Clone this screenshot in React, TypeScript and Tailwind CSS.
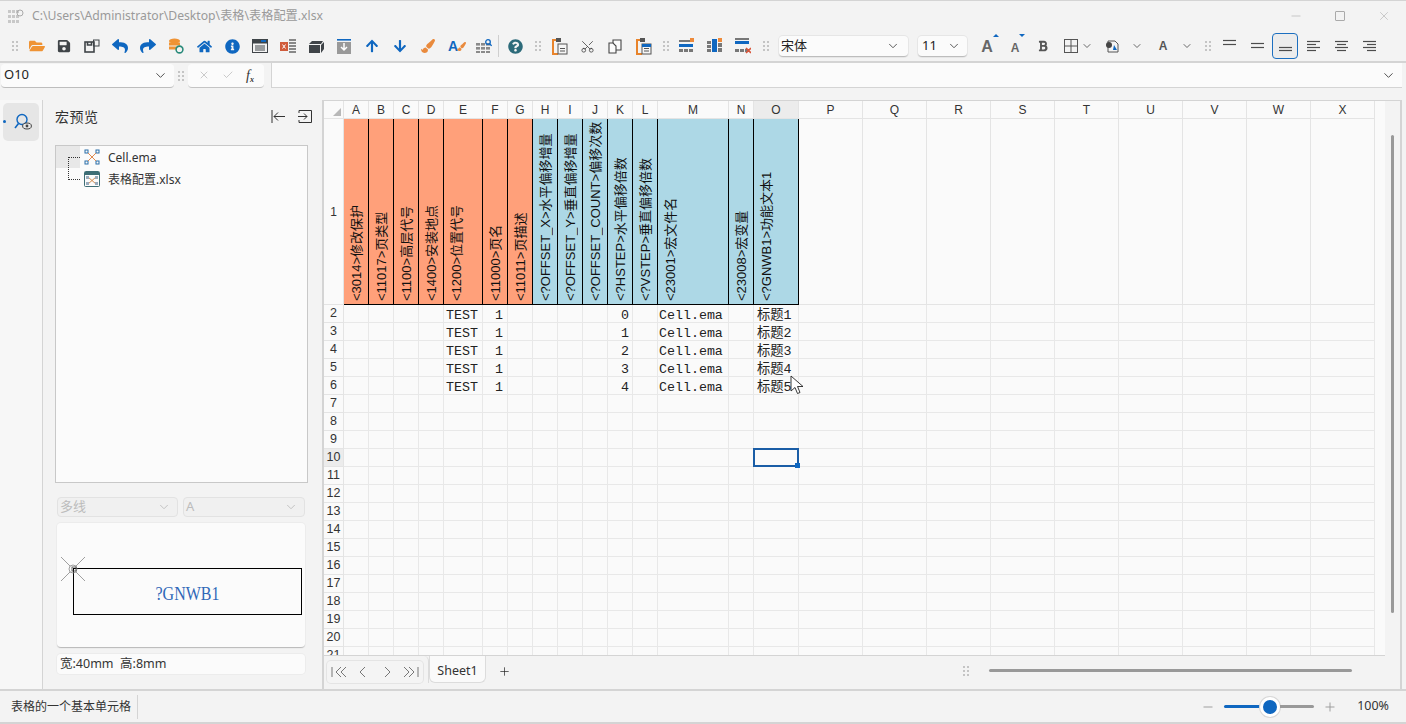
import type { ReactNode } from "react"
import { ChevronDown, Minus, Plus, X, Check, Scissors } from "lucide-react"
import { FaFolderOpen, FaHome, FaInfoCircle, FaQuestionCircle, FaReply, FaShare, FaArrowUp, FaArrowDown, FaSave, FaBold, FaPaintBrush } from "react-icons/fa"

const ui = "font-['Noto_Sans','Noto_Sans_CJK_SC',sans-serif]"
const arial = "font-['Liberation_Sans','Noto_Sans_CJK_SC',sans-serif]"
const mono = "font-['Liberation_Mono','Noto_Sans_CJK_SC',monospace]"

const letters = "ABCDEFGHIJKLMNOPQRSTUVWX".split("")
const widths = [25, 25, 25, 25, 39, 25, 25, 25, 25, 25, 25, 25, 71, 25, 45, 64, 64, 64, 64, 64, 64, 64, 64, 64]
const heads = [
  "<3014>修改保护", "<11017>页类型", "<1100>高层代号", "<1400>安装地点", "<1200>位置代号", "<11000>页名", "<11011>页描述",
  "<?OFFSET_X>水平偏移增量", "<?OFFSET_Y>垂直偏移增量", "<?OFFSET_COUNT>偏移次数", "<?HSTEP>水平偏移倍数", "<?VSTEP>垂直偏移倍数",
  "<23001>宏文件名", "<23008>宏变量", "<?GNWB1>功能文本1",
]

function Dots() {
  return (
    <svg width="6" height="10" viewBox="0 0 6 10" fill="#c4c4c4">
      <rect x="0" y="0" width="2" height="2" /><rect x="4" y="0" width="2" height="2" />
      <rect x="0" y="4" width="2" height="2" /><rect x="4" y="4" width="2" height="2" />
      <rect x="0" y="8" width="2" height="2" /><rect x="4" y="8" width="2" height="2" />
    </svg>
  )
}

function Grip({ className = "" }: { className?: string }) {
  return (
    <div className={`w-4 h-7 shrink-0 flex items-center justify-center ${className}`}>
      <Dots />
    </div>
  )
}

function Tool({ children, active, className = "" }: { children: ReactNode; active?: boolean; className?: string }) {
  return (
    <div className={active
      ? `w-[26px] h-[26px] mx-px shrink-0 flex items-center justify-center rounded-[4px] border border-[#1c6fc0] bg-[#ececec] ${className}`
      : `w-7 h-7 shrink-0 flex items-center justify-center ${className}`}>
      {children}
    </div>
  )
}

function Lines({ rows, align = "left" }: { rows: [number, number][]; align?: "left" | "center" | "right" }) {
  return (
    <svg width="13" height="14" viewBox="0 0 13 14" stroke="#4c4c4c" strokeWidth="1.2">
      {rows.map(([y, w], i) => {
        const x = align === "left" ? 0 : align === "center" ? (13 - w) / 2 : 13 - w
        return <line key={i} x1={x} x2={x + w} y1={y + 0.5} y2={y + 0.5} />
      })}
    </svg>
  )
}

function TableIcon({ kind }: { kind: "row" | "col" | "del" }) {
  const g = "#777"
  return (
    <svg width="16" height="16" viewBox="0 0 16 16">
      {kind === "col" ? (
        <>
          <rect x="0" y="3" width="4" height="3" fill={g} /><rect x="0" y="7" width="4" height="3" fill={g} /><rect x="0" y="11" width="4" height="3" fill={g} />
          <rect x="5" y="1" width="5" height="13" fill="#0f67c0" />
          <rect x="11" y="5" width="4" height="4" fill={g} /><rect x="11" y="10" width="4" height="4" fill={g} />
          <rect x="11" y="0" width="4" height="4" fill="#ee8a3a" />
        </>
      ) : (
        <>
          <rect x="0" y={kind === "del" ? 0 : 2} width="14" height="2" fill={g} />
          <rect x="0" y={kind === "del" ? 3 : 6} width="14" height="3" fill="#0f67c0" />
          <rect x="0" y="11" width="4" height="3" fill={g} /><rect x="5" y="11" width="4" height="3" fill={g} /><rect x="10" y="11" width="4" height="3" fill={g} />
          {kind === "row" && <rect x="11" y="0" width="4" height="4" fill="#ee8a3a" />}
          {kind === "del" && <path d="M11 10l5 5M16 10l-5 5" stroke="#d9553a" strokeWidth="1.6" />}
        </>
      )}
    </svg>
  )
}

function Clip({ blue }: { blue?: boolean }) {
  return (
    <svg width="16" height="17" viewBox="0 0 16 17" fill="none">
      <path d="M4 2H1v14h5" stroke="#e8842c" strokeWidth="2" />
      <rect x="4" y="0" width="5" height="4" fill="#555" />
      <rect x="6" y="6" width="9" height="10" fill="#f6f6f6" stroke="#555" />
      {blue && <rect x="6" y="6" width="9" height="3" fill="#0f67c0" />}
      <path d="M8 10.5h5M8 13h5" stroke="#555" />
    </svg>
  )
}

function FontSizeIcon({ size, up }: { size: string; up?: boolean }) {
  return (
    <div className="relative">
      <span className={`${arial} ${size} font-bold text-[#666] leading-none`}>A</span>
      <svg width="6" height="3" viewBox="0 0 6 3" fill="#0f67c0" className="absolute -right-[6px] top-0">
        <path d={up ? "M3 0l3 3H0z" : "M0 0h6L3 3z"} />
      </svg>
    </div>
  )
}

function Toolbar() {
  return (
    <div className="h-[30px] flex items-center pl-[7px]">
      <Grip />
      <Tool><FaFolderOpen size={16} color="#ef9334" /></Tool>
      <Tool className="-ml-px"><FaSave size={14} color="#3f4448" /></Tool>
      <Tool>
        <svg width="16" height="14" viewBox="0 0 16 14" fill="none" stroke="#3f4448" strokeWidth="1.6"><rect x="1" y="3" width="9" height="10" /><rect x="9.500" y="1" width="5.500" height="6" strokeWidth="1" /><path d="M3.500 3v3h4V3" /></svg>
      </Tool>
      <Tool><FaReply size={16} color="#0f67c0" /></Tool>
      <Tool><FaShare size={16} color="#0f67c0" /></Tool>
      <Tool>
        <svg width="16" height="16" viewBox="0 0 16 16"><ellipse cx="6.500" cy="3" rx="5.500" ry="2.500" fill="#ef9334" /><rect x="1" y="4.500" width="11" height="3" fill="#ef9334" /><rect x="1" y="8.500" width="8" height="3" fill="#ef9334" /><circle cx="11.500" cy="11.500" r="3.400" fill="none" stroke="#2a8b7b" strokeWidth="1.6" /></svg>
      </Tool>
      <Tool><FaHome size={15} color="#0f67c0" /></Tool>
      <Tool><FaInfoCircle size={15} color="#0f67c0" /></Tool>
      <Tool>
        <svg width="16" height="14" viewBox="0 0 16 14" fill="none" stroke="#3f4448"><rect x="0.500" y="0.500" width="15" height="13" /><rect x="1" y="1" width="14" height="3" fill="#3f4448" /><rect x="9" y="1" width="5" height="2" fill="#0f67c0" stroke="none" /><path d="M3 7h10M3 9h10M3 11h10" /></svg>
      </Tool>
      <Tool>
        <svg width="16" height="14" viewBox="0 0 16 14"><rect x="0" y="3" width="8" height="9" fill="#d05c3c" /><path d="M2.500 5.500l3 4M5.500 5.500l-3 4" stroke="#fff" /><path d="M9 1h7M9 4h7M9 7h7M9 10h7M9 13h7" stroke="#666" strokeWidth="1.4" /></svg>
      </Tool>
      <Tool>
        <svg width="15" height="13" viewBox="0 0 15 13" fill="#3f4448"><path d="M0 4l3-3h11l-2 3z" /><rect x="0" y="5" width="11" height="8" /><path d="M12 5l3-3v7l-3 4z" /></svg>
      </Tool>
      <Tool>
        <svg width="14" height="15" viewBox="0 0 14 15"><rect x="0" y="0" width="14" height="1.6" fill="#0f67c0" /><rect x="0" y="3" width="14" height="12" fill="#999" /><path d="M7 4v7M4 8l3 3 3-3" stroke="#fff" strokeWidth="1.5" fill="none" /></svg>
      </Tool>
      <Tool><FaArrowUp size={14} color="#0f67c0" /></Tool>
      <Tool><FaArrowDown size={14} color="#0f67c0" /></Tool>
      <Tool><FaPaintBrush size={14} color="#e98a3d" /></Tool>
      <Tool>
        <div className="relative w-4 h-4">
          <span className={`${arial} absolute left-0 -top-0.5 text-[14px] font-bold text-[#0f67c0]`}>A</span>
          <FaPaintBrush size={9} color="#e98a3d" className="absolute right-[-2px] top-1" />
        </div>
      </Tool>
      <Tool>
        <svg width="16" height="14" viewBox="0 0 16 14" fill="#8a8a8a">
          {[0, 5, 10].map((x) => [4, 8, 12].map((y) => <rect key={`${x}-${y}`} x={x} y={y} width="4" height="2.6" />))}
          <circle cx="12" cy="3" r="2.3" fill="none" stroke="#0f67c0" strokeWidth="1.3" /><path d="M13.6 4.8l2 2" stroke="#0f67c0" strokeWidth="1.3" />
        </svg>
      </Tool>
      <div className="w-px h-[22px] bg-[#cfcfcf] shrink-0" />
      <Tool className="ml-0.5"><FaQuestionCircle size={15} color="#2d6b7a" /></Tool>
      <Grip className="ml-px" />
      <Tool><Clip /></Tool>
      <Tool className="-ml-px"><Scissors size={15} strokeWidth={1.3} color="#444" className="-rotate-90" /></Tool>
      <Tool>
        <svg width="14" height="15" viewBox="0 0 14 15" fill="#fafafa" stroke="#444" strokeWidth="1.1"><path d="M5 1h8v10H5z" /><path d="M1 4h4l3 3v7H1z" /></svg>
      </Tool>
      <Tool className="ml-px"><Clip blue /></Tool>
      <Grip />
      <Tool className="-ml-px"><TableIcon kind="row" /></Tool>
      <Tool><TableIcon kind="col" /></Tool>
      <Tool><TableIcon kind="del" /></Tool>
      <Grip className="ml-px" />
      <div className={`${ui} w-[129px] h-[21px] ml-[5px] rounded-[4px] bg-[#fbfbfb] border-b border-[#bdbdbd] shadow-[0_0_0_1px_#e6e6e6] shrink-0 flex items-center justify-between pl-0.5 pr-2 text-[13px] text-[#222]`}>
        <span>宋体</span><ChevronDown size={14} strokeWidth={1.5} color="#444" />
      </div>
      <div className={`${ui} w-[49px] h-[21px] ml-[10px] rounded-[4px] bg-[#fbfbfb] border-b border-[#bdbdbd] shadow-[0_0_0_1px_#e6e6e6] shrink-0 flex items-center justify-between pl-1 pr-1.5 text-[13px] text-[#222]`}>
        <span>11</span><ChevronDown size={14} strokeWidth={1.5} color="#444" />
      </div>
      <div className="w-[6px] shrink-0" />
      <Tool><FontSizeIcon size="text-[16px]" up /></Tool>
      <Tool><FontSizeIcon size="text-[12px]" /></Tool>
      <Tool><FaBold size={12} color="#555" /></Tool>
      <Tool>
        <svg width="14" height="14" viewBox="0 0 14 14" fill="none" stroke="#555"><rect x="0.500" y="0.500" width="13" height="13" /><path d="M7 0v14M0 7h14" /></svg>
      </Tool>
      <ChevronDown size={12} strokeWidth={1.6} color="#444" className="-ml-1 mr-[5px] shrink-0" />
      <Tool>
        <svg width="13" height="14" viewBox="0 0 13 14"><path d="M2 2h7l3 3v8H2z" fill="none" stroke="#555" /><circle cx="3" cy="6" r="3" fill="#444" /><path d="M8 6l3 5H7z" fill="#0f67c0" /></svg>
      </Tool>
      <ChevronDown size={12} strokeWidth={1.6} color="#444" className="ml-[5px] mr-[6px] shrink-0" />
      <Tool><span className={`${arial} text-[12px] font-bold text-[#555]`}>A</span></Tool>
      <ChevronDown size={12} strokeWidth={1.6} color="#444" className="ml-1 shrink-0" />
      <Grip className="ml-[7px]" />
      <Tool className="-ml-px"><Lines rows={[[1, 13], [5, 13]]} /></Tool>
      <Tool><Lines rows={[[4, 13], [8, 13]]} /></Tool>
      <Tool active><Lines rows={[[8, 13], [11, 13]]} /></Tool>
      <Tool><Lines rows={[[2, 13], [5, 9], [8, 13], [11, 9]]} /></Tool>
      <Tool><Lines rows={[[2, 13], [5, 9], [8, 13], [11, 9]]} align="center" /></Tool>
      <Tool><Lines rows={[[2, 13], [5, 9], [8, 13], [11, 9]]} align="right" /></Tool>
    </div>
  )
}

function FormulaBar() {
  return (
    <div className="h-[27px] flex items-center pl-px pr-1 border-t-2 border-[#d4d4d4]">
      <div className={`${ui} w-[173px] h-[24px] shrink-0 rounded-[4px] bg-[#fbfbfb] border-b border-[#bdbdbd] flex items-center justify-between pl-[3px] pr-1.5 text-[13px] text-[#222]`}>
        <span>O10</span><ChevronDown size={15} strokeWidth={1.5} color="#444" />
      </div>
      <div className="w-[14px] shrink-0 flex justify-center"><Dots /></div>
      <div className="w-[76px] h-[24px] shrink-0 rounded-[4px] bg-[#fbfbfb] border-b border-[#c4c4c4] flex items-center justify-around px-1">
        <X size={12} strokeWidth={1.2} color="#aaa" />
        <Check size={12} strokeWidth={1.2} color="#aaa" />
        <span className="font-['Liberation_Serif',serif] italic text-[14px] text-[#333]">f<sub className="text-[8px] font-bold">x</sub></span>
      </div>
      <div className="w-[7px] shrink-0" />
      <div className="flex-1 h-[25px] bg-[#fbfbfb] border-b border-l border-[#d4d4d4] flex items-center justify-end pr-1.5">
        <ChevronDown size={15} strokeWidth={1.5} color="#444" />
      </div>
    </div>
  )
}

function Rail() {
  return (
    <div className="w-[43px] shrink-0 border-r border-[#d4d4d4] bg-[#f7f7f7] pt-[3px] pl-[3px]">
      <div className="relative w-9 h-[38px] rounded-[5px] bg-[#e6e6e6] flex items-center justify-center">
        <span className="absolute left-0 top-[17px] w-[3px] h-[3px] rounded-full bg-[#0f67c0]" />
        <svg width="18" height="18" viewBox="0 0 18 18" fill="none" className="ml-1">
          <circle cx="8" cy="6.500" r="5" stroke="#0f67c0" strokeWidth="1.4" />
          <path d="M4.500 10.500L1 15" stroke="#0f67c0" strokeWidth="1.6" />
          <ellipse cx="13" cy="13" rx="4.400" ry="3" stroke="#444" strokeWidth="1" fill="#e6e6e6" />
          <circle cx="13" cy="13" r="1.400" fill="#444" />
        </svg>
      </div>
    </div>
  )
}

function MiniSelect({ label, width }: { label: string; width: string }) {
  return (
    <div className={`${width} h-[20px] rounded-[4px] border border-[#e2e2e2] bg-[#f0f0f0] flex items-center justify-between pl-0.5 pr-1.5 text-[13px] text-[#bcbcbc]`}>
      <span>{label}</span><ChevronDown size={14} strokeWidth={1.5} color="#bcbcbc" />
    </div>
  )
}

function MacroPanel() {
  return (
    <div className={`${ui} w-[279px] shrink-0 pl-3 flex flex-col`}>
      <div className="h-[33px] flex items-center justify-between pr-[10px]">
        <span className="text-[14px] text-[#333] tracking-[0.5px]">宏预览</span>
        <div className="flex items-center gap-[12px]">
          <svg width="15" height="13" viewBox="0 0 15 13" fill="none" stroke="#333"><path d="M1 0v13M14 6.500H3M7 2.500l-4 4 4 4" /></svg>
          <svg width="14" height="13" viewBox="0 0 14 13" fill="none" stroke="#333"><path d="M1 3V.5h12.500v12H1V10M0 6.500h9M6 3.500l3 3-3 3" /></svg>
        </div>
      </div>
      <div className="w-[253px] h-[338px] mt-[12px] border border-[#c8c8c8] bg-[#fbfbfb] text-[12px] text-[#333] relative">
        <div className="h-[22px] flex items-center">
          <div className="w-6 h-full bg-[#e8e8e8]" />
          <svg width="16" height="16" viewBox="0 0 16 16" fill="none" className="ml-1" stroke="#2b6ea8">
            <rect x="1" y="1" width="3" height="3" /><rect x="12" y="1" width="3" height="3" /><rect x="1" y="12" width="3" height="3" /><rect x="12" y="12" width="3" height="3" />
            <path d="M4 4l8 8M12 4l-8 8" stroke="#e08a50" />
          </svg>
          <span className="ml-[8px] mt-0.5">Cell.ema</span>
        </div>
        <div className="h-[22px] flex items-center pl-6">
          <svg width="16" height="16" viewBox="0 0 16 16" fill="none" className="ml-1">
            <rect x="0.500" y="0.500" width="15" height="15" rx="1" stroke="#3d6d75" />
            <rect x="1" y="1" width="14" height="3" fill="#3d6d75" />
            <path d="M4 6l8 7M12 6l-8 7" stroke="#d08a50" />
            <rect x="2" y="5" width="3" height="3" fill="#9ab" /><rect x="11" y="5" width="3" height="3" fill="#9ab" /><rect x="2" y="11" width="3" height="3" fill="#9ab" /><rect x="11" y="11" width="3" height="3" fill="#9ab" />
          </svg>
          <span className="ml-[8px] mt-0.5">表格配置.xlsx</span>
        </div>
        {/* tree connector */}
        <div className="absolute left-[12px] top-[11px] w-3 h-[23px] border-l border-t border-b border-dotted border-[#333]" />
      </div>
      <div className="flex gap-[5px] mt-[14px] ml-0.5">
        <MiniSelect label="多线" width="w-[121px]" />
        <MiniSelect label="A" width="w-[122px]" />
      </div>
      <div className="relative w-[248px] h-[125px] mt-[6px] ml-0.5 rounded-[4px] bg-[#fbfbfb] border-b border-[#bdbdbd] shadow-[0_0_0_1px_#ececec] flex items-end pl-[16px] pb-[32px]">
        <div className="w-[229px] h-[47px] border border-black flex items-center justify-center pt-1 font-['Liberation_Serif',serif] text-[16px] text-[#2f68b8]">
          <span className="inline-block scale-y-[1.15]">?GNWB1</span>
        </div>
        <svg width="26" height="26" viewBox="0 0 26 26" fill="none" stroke="#888" strokeWidth="0.8" className="absolute left-[3px] top-[33px]">
          <path d="M1 1l9 9M25 1l-9 9M1 25l9-9M25 25l-9-9" />
          <circle cx="13" cy="13" r="4" />
          <rect x="12" y="11" width="4" height="4" stroke="#444" />
        </svg>
      </div>
      <div className="w-[248px] h-[20px] mt-[6px] ml-0.5 rounded-[4px] bg-[#fbfbfb] shadow-[0_0_0_1px_#ececec] flex items-center pl-[3px] text-[12.5px] text-[#333] whitespace-pre">
        宽:40mm  高:8mm
      </div>
    </div>
  )
}

function Cursor() {
  return (
    <svg width="14" height="20" viewBox="0 0 14 20" className="absolute left-[36px] -top-[2px] z-20">
      <path d="M1 1v15l4-3.500 2.500 6 2.500-1-2.500-6H13z" fill="#fff" stroke="#222" strokeWidth="0.9" />
    </svg>
  )
}

function Sheet() {
  const rows = Array.from({ length: 20 }, (_, i) => i + 2)
  const template = `20px ${widths.map((w) => `${w}px`).join(" ")}`
  return (
    <div className={`${mono} flex-1 min-w-0 min-h-0 overflow-hidden bg-[#fafafa] border-b border-[#d4d4d4]`}>
      <div className="grid" style={{ gridTemplateColumns: template, gridTemplateRows: "18px 186px", gridAutoRows: "18px" }}>
        <div className="border-r border-b border-[#e4e4e4] relative">
          <span className="absolute right-[2px] bottom-[2px] w-0 h-0 border-l-[8px] border-l-transparent border-b-[8px] border-b-[#b8b8b8]" />
        </div>
        {letters.map((l) => (
          <div key={l} className={`${arial} border-r border-b border-[#e4e4e4] text-[12px] text-[#333] flex items-center justify-center ${l === "O" ? "bg-[#ececec]" : ""}`}>{l}</div>
        ))}

        <div className={`${arial} border-r border-b border-[#e4e4e4] text-[12px] text-[#333] flex items-center justify-center`}>1</div>
        {letters.map((l, i) => (
          <div key={l} className={heads[i]
            ? `${arial} border-r border-b border-black flex items-center justify-start pl-[6px] overflow-hidden text-[13px] leading-none text-[#111] ${i < 7 ? "bg-[#ffa07a]" : "bg-[#add8e6]"}`
            : "border-r border-b border-[#e4e4e4]"}>
            {heads[i] && <span className="[writing-mode:vertical-rl] [text-orientation:sideways] rotate-180 h-full pt-[3px] whitespace-nowrap">{heads[i]}</span>}
          </div>
        ))}

        {rows.map((r) => (
          <Row key={r} r={r} />
        ))}
      </div>
    </div>
  )
}

function Row({ r }: { r: number }) {
  const filled = r <= 6
  return (
    <>
      <div className={`${arial} border-r border-b border-[#e4e4e4] text-[12.5px] text-[#333] flex items-center justify-center ${r === 10 ? "bg-[#ececec]" : ""}`}>{r}</div>
      {letters.map((l) => {
        let text = ""
        let cls = "justify-start pl-0.5"
        if (filled && l === "E") text = "TEST"
        if (filled && l === "F") { text = "1"; cls = "justify-end pr-1" }
        if (filled && l === "K") { text = String(r - 2); cls = "justify-end pr-[3px]" }
        if (filled && l === "M") { text = "Cell.ema"; cls = "justify-start pl-px" }
        if (filled && l === "O") { text = `标题${r - 1}`; cls = "justify-start pl-[3px]" }
        const selected = l === "O" && r === 10
        return (
          <div key={l} className={`relative border-r border-b border-[#e8e8e8] pt-1 text-[13.3px] leading-none text-[#222] flex items-center whitespace-nowrap ${cls}`}>
            {text}
            {l === "O" && r === 6 && <Cursor />}
            {selected && (
              <div className="absolute -left-px -top-px -right-px -bottom-px border-2 border-[#1a5da6] z-10">
                <span className="absolute -right-[3px] -bottom-[3px] w-[5px] h-[5px] bg-[#0f67c0]" />
              </div>
            )}
          </div>
        )
      })}
    </>
  )
}

function NavArrows() {
  const paths = ["M1 1v10M10 1l-5 5 5 5M15 1l-5 5 5 5", "M10 1L5 6l5 5", "M6 1l5 5-5 5", "M1 1l5 5-5 5M6 1l5 5-5 5M15 1v10"]
  return (
    <div className="h-[22px] rounded-[4px] bg-[#f4f4f4] shadow-[0_0_0_1px_#e4e4e4] flex items-center gap-[8px] px-[4px]">
      {paths.map((d) => (
        <svg key={d} width="16" height="12" viewBox="0 0 16 12" fill="none" stroke="#777" strokeWidth="1"><path d={d} /></svg>
      ))}
    </div>
  )
}

function TabBar() {
  return (
    <div className={`${ui} h-[33px] shrink-0 flex items-start pr-[48px]`}>
      <div className="h-[27px] flex items-center pl-[3px] pr-[5px] pt-1 rounded-tr-[5px] border-r border-[#dcdcdc]">
        <NavArrows />
      </div>
      <div className="h-[27px] w-[57px] flex items-center justify-center pt-1 rounded-b-[6px] bg-[#fafafa] border border-t-0 border-[#dcdcdc] text-[12.5px] text-[#333]">
        Sheet1
      </div>
      <div className="h-[27px] w-[34px] flex items-center justify-center pt-1 ml-px">
        <Plus size={13} strokeWidth={1.3} color="#222" />
      </div>
      <div className="flex-1" />
      <div className="h-[28px] pt-px flex items-center">
        <Dots />
        <div className="w-[363px] h-[3px] rounded-full bg-[#999] ml-[20px]" />
      </div>
    </div>
  )
}

function StatusBar() {
  return (
    <div className={`${ui} h-[35px] shrink-0 border-t-2 border-b-2 border-[#d4d4d4] flex items-center justify-between text-[12px] text-[#333]`}>
      <div className="h-[24px] pl-[11px] pr-[6px] flex items-center border-r border-[#d4d4d4]">表格的一个基本单元格</div>
      <div className="flex items-center pr-[17px]">
        <Minus size={14} strokeWidth={1.6} color="#999" />
        <div className="flex items-center ml-[9px] mr-[9px] w-[90px]">
          <div className="w-[36px] h-[3px] rounded-l-full bg-[#0f67c0]" />
          <div className="w-5 h-5 rounded-full bg-[#0f67c0] border-[3px] border-white shadow-[0_0_0_1px_#d8d8d8] shrink-0" />
          <div className="flex-1 h-[3px] rounded-r-full bg-[#999]" />
        </div>
        <Plus size={14} strokeWidth={1.6} color="#999" />
        <span className="ml-5 text-[12.5px]">100%</span>
      </div>
    </div>
  )
}

export default function App() {
  return (
    <div className="w-[1406px] h-[724px] overflow-hidden bg-[#f3f3f3] flex flex-col border-t border-[#d4d4d4]">
      <div className={`${ui} h-[30px] shrink-0 flex items-center pl-[8px] pr-[15px] text-[12.2px] text-[#9a9a9a]`}>
        <svg width="16" height="14" viewBox="0 0 16 14" fill="#c8c8c8" className="mr-2">
          {[1, 6, 11].map((y) => [0, 4, 8].map((x) => <rect key={`${x}-${y}`} x={x} y={y} width="3" height="3" />))}
          <circle cx="12" cy="4" r="3" fill="none" stroke="#aaa" />
        </svg>
        <span>C:\Users\Administrator\Desktop\表格\表格配置.xlsx</span>
        <div className="flex-1" />
        <div className="flex items-center gap-[30px]">
          <Minus size={14} strokeWidth={1} color="#aaa" />
          <div className="w-[10px] h-[10px] border border-[#aaa] rounded-[1px] mx-[2px]" />
          <X size={14} strokeWidth={1} color="#aaa" />
        </div>
      </div>
      <Toolbar />
      <FormulaBar />
      <div className="flex-1 min-h-0 flex pt-3">
        <Rail />
        <MacroPanel />
        <div className="flex-1 min-w-0 flex flex-col border-l-2 border-r-2 border-t border-[#d4d4d4] mr-[4px]">
          <div className="flex-1 min-h-0 flex">
            <Sheet />
            <div className="w-[15px] shrink-0 flex justify-center pt-[34px]">
              <div className="w-[3px] h-[478px] rounded-full bg-[#999]" />
            </div>
          </div>
          <TabBar />
        </div>
      </div>
      <StatusBar />
    </div>
  )
}
